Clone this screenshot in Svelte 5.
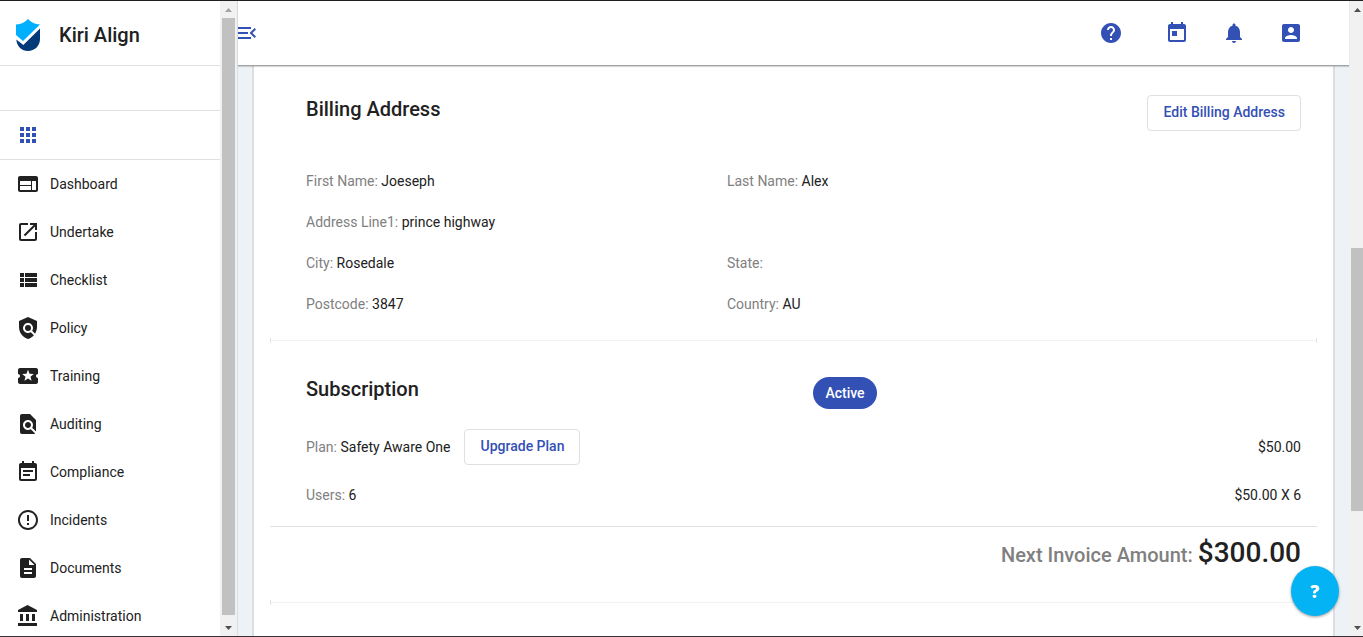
<script>
	const nav = [
		{ label: 'Dashboard', icon: 'M20 4H4c-1.1 0-1.99.9-1.99 2L2 18c0 1.1.9 2 2 2h16c1.1 0 2-.9 2-2V6c0-1.1-.9-2-2-2zm-5 14H4v-4h11v4zm0-5H4V9h11v4zm5 5h-4V9h4v9z' },
		{ label: 'Undertake', icon: 'M19 19H5V5h7V3H5c-1.11 0-2 .9-2 2v14c0 1.1.89 2 2 2h14c1.1 0 2-.9 2-2v-7h-2v7zM14 3v2h3.59l-9.83 9.83 1.41 1.41L19 6.41V10h2V3h-7z' },
		{ label: 'Checklist', icon: 'M4 14h4v-4H4v4zm0 5h4v-4H4v4zM4 9h4V5H4v4zm5 5h12v-4H9v4zm0 5h12v-4H9v4zM9 5v4h12V5H9z' },
		{ label: 'Policy', icon: 'M21 5l-9-4-9 4v6c0 5.55 3.84 10.74 9 12 2.3-.56 4.33-1.9 5.88-3.71l-3.12-3.12c-1.94 1.29-4.58 1.07-6.29-.64-1.95-1.95-1.95-5.12 0-7.07 1.95-1.95 5.12-1.95 7.07 0 1.71 1.71 1.92 4.35.64 6.29l2.9 2.9C20.29 15.69 21 13.38 21 11V5zM9 12a3 3 0 1 0 6 0a3 3 0 1 0-6 0z' },
		{ label: 'Training', icon: 'M20 12c0-1.1.9-2 2-2V6c0-1.1-.9-2-2-2H4c-1.1 0-1.99.9-1.99 2v4c1.1 0 1.99.9 1.99 2s-.89 2-2 2v4c0 1.1.9 2 2 2h16c1.1 0 2-.9 2-2v-4c-1.1 0-2-.9-2-2zm-4.42 4.8L12 14.5l-3.58 2.3 1.08-4.12-3.29-2.69 4.24-.25L12 5.8l1.54 3.95 4.24.25-3.29 2.69 1.09 4.11z' },
		{ label: 'Auditing', icon: 'M20 19.59V8l-6-6H6c-1.1 0-1.99.9-1.99 2L4 20c0 1.1.89 2 1.99 2H18c.45 0 .85-.15 1.19-.4l-4.43-4.43c-.8.52-1.74.83-2.76.83-2.76 0-5-2.24-5-5s2.24-5 5-5 5 2.24 5 5c0 1.02-.31 1.96-.83 2.75L20 19.59zM9 13c0 1.66 1.34 3 3 3s3-1.34 3-3-1.34-3-3-3-3 1.34-3 3z' },
		{ label: 'Compliance', icon: 'M17 10H7v2h10v-2zm2-7h-1V1h-2v2H8V1H6v2H5c-1.11 0-1.99.9-1.99 2L3 19c0 1.1.89 2 2 2h14c1.1 0 2-.9 2-2V5c0-1.1-.9-2-2-2zm0 16H5V8h14v11zm-5-5H7v2h7v-2z' },
		{ label: 'Incidents', icon: 'M11 15h2v2h-2zm0-8h2v6h-2zm.99-5C6.47 2 2 6.48 2 12s4.47 10 9.99 10C17.52 22 22 17.52 22 12S17.52 2 11.99 2zM12 20c-4.42 0-8-3.58-8-8s3.58-8 8-8 8 3.58 8 8-3.58 8-8 8z' },
		{ label: 'Documents', icon: 'M14 2H6c-1.1 0-1.99.9-1.99 2L4 20c0 1.1.89 2 1.99 2H18c1.1 0 2-.9 2-2V8l-6-6zm2 16H8v-2h8v2zm0-4H8v-2h8v2zm-3-5V3.5L18.5 9H13z' },
		{ label: 'Administration', icon: 'M4 10v7h3v-7H4zm6 0v7h3v-7h-3zM2 22h19v-3H2v3zm14-12v7h3v-7h-3zm-4.5-9L2 6v2h19V6l-9.5-5z' }
	];

	const tools = [
		{ name: 'help', icon: 'M12 2C6.48 2 2 6.48 2 12s4.48 10 10 10 10-4.48 10-10S17.52 2 12 2zm1 17h-2v-2h2v2zm2.07-7.75l-.9.92C13.45 12.9 13 13.5 13 15h-2v-.5c0-1.1.45-2.1 1.17-2.83l1.24-1.26c.37-.36.59-.86.59-1.41 0-1.1-.9-2-2-2s-2 .9-2 2H8c0-2.21 1.79-4 4-4s4 1.79 4 4c0 .88-.36 1.68-.93 2.25z' },
		{ name: 'calendar', icon: 'M19 3h-1V1h-2v2H8V1H6v2H5c-1.11 0-1.99.9-1.99 2L3 19c0 1.1.89 2 2 2h14c1.1 0 2-.9 2-2V5c0-1.1-.9-2-2-2zm0 16H5V8h14v11zM7 10h5v5H7z' },
		{ name: 'notifications', icon: 'M12 22c1.1 0 2-.9 2-2h-4c0 1.1.89 2 2 2zm6-6v-5c0-3.07-1.64-5.64-4.5-6.32V4c0-.83-.67-1.5-1.5-1.5s-1.5.67-1.5 1.5v.68C7.63 5.36 6 7.92 6 11v5l-2 2v1h16v-1l-2-2z' },
		{ name: 'account', icon: 'M3 5v14c0 1.1.89 2 2 2h14c1.1 0 2-.9 2-2V5c0-1.1-.9-2-2-2H5c-1.11 0-2 .9-2 2zm12 4c0 1.66-1.34 3-3 3s-3-1.34-3-3 1.34-3 3-3 3 1.34 3 3zm-9 8c0-2 4-3.1 6-3.1s6 1.1 6 3.1v1H6v-1z' }
	];

	const address = [
		[['First Name', 'Joeseph'], ['Last Name', 'Alex']],
		[['Address Line1', 'prince highway']],
		[['City', 'Rosedale'], ['State', '']],
		[['Postcode', '3847'], ['Country', 'AU']]
	];

	const price = 50;
	const users = 6;
	const money = (n) => '$' + n.toFixed(2);
</script>

{#snippet icon(d)}
	<svg class="icon" viewBox="0 0 24 24" aria-hidden="true"><path {d} /></svg>
{/snippet}

{#snippet scrollbar(before, size, after, dim)}
	<div class="scrollbar" aria-hidden="true">
		<svg class="arrow" class:dim viewBox="0 0 17 17"><path d="M5 11h7L8.500 7z" /></svg>
		<div style:flex-grow={before}></div>
		<div class="thumb" style:flex-grow={size}></div>
		<div style:flex-grow={after}></div>
		<svg class="arrow" viewBox="0 0 17 17"><path d="M5 7h7l-3.500 4z" /></svg>
	</div>
{/snippet}

<div class="app">
	<aside class="sidebar">
		<div class="side-content">
			<div class="brand">
				<svg class="logo" viewBox="0 0 24 32" aria-hidden="true">
					<path fill="#00b0ff" d="M12 0c2.500 3 6.500 5.200 12 5.400L7 22 0 16V5.400C5.500 5.200 9.500 3 12 0z" />
					<path fill="#003a78" d="M24 9.500V20c0 7-5.500 12-12 12C6 32 .8 27.500.3 20.500L7.300 26z" />
				</svg>
				<span class="brand-name">Kiri Align</span>
			</div>
			<div class="blank"></div>
			<div class="apps">
				<button class="icon-btn" aria-label="Apps">
					{@render icon('M4 8h4V4H4v4zm6 12h4v-4h-4v4zm-6 0h4v-4H4v4zm0-6h4v-4H4v4zm6 0h4v-4h-4v4zm6-10v4h4V4h-4zm-6 4h4V4h-4v4zm6 6h4v-4h-4v4zm0 6h4v-4h-4v4z')}
				</button>
			</div>
			<nav>
				{#each nav as item}
					<a href="#{item.label.toLowerCase()}">
						{@render icon(item.icon)}
						{item.label}
					</a>
				{/each}
			</nav>
		</div>
		{@render scrollbar(0, 597, 4, true)}
	</aside>

	<div class="main">
		<header>
			<button class="icon-btn menu" aria-label="Toggle menu">
				{@render icon('M3 18h13v-2H3v2zM3 13h10v-2H3v2zm0-7v2h13V6H3zm18 9.590L17.420 12 21 8.410 19.590 7l-5 5 5 5L21 15.590z')}
			</button>
			<div class="tools">
				{#each tools as tool}
					<button class="icon-btn {tool.name}" aria-label={tool.name}>{@render icon(tool.icon)}</button>
				{/each}
			</div>
		</header>

		<main>
			<div class="card">
				<section class="billing">
					<div class="title-row">
						<h2>Billing Address</h2>
						<button class="btn">Edit Billing Address</button>
					</div>
					<div class="fields">
						{#each address as row}
							<div class="field-row">
								{#each row as [label, value]}
									<div><span class="label">{label}:</span> {value}</div>
								{/each}
							</div>
						{/each}
					</div>
				</section>

				<hr />

				<section class="subscription">
					<div class="status-row">
						<h2>Subscription</h2>
						<div><span class="chip">Active</span></div>
					</div>
					<div class="line plan">
						<div><span class="label">Plan:</span> Safety Aware One</div>
						<button class="btn">Upgrade Plan</button>
						<span class="amount">{money(price)}</span>
					</div>
					<div class="line">
						<div><span class="label">Users:</span> {users}</div>
						<span class="amount">{money(price)} X {users}</span>
					</div>
				</section>

				<div class="total">
					<span class="total-label">Next Invoice Amount:</span>
					<span class="total-value">{money(price * users)}</span>
				</div>

				<hr />
			</div>
		</main>
	</div>

	<div class="page-scroll">
		{@render scrollbar(230, 263, 108, false)}
	</div>

	<button class="fab" aria-label="Support">?</button>
</div>

<style>
:global(body) {
	margin: 0;
	overflow: hidden;
}

.app {
	box-sizing: border-box;
	display: flex;
	height: 100vh;
	overflow: hidden;
	border-top: 1px solid #231f20;
	border-bottom: 1px solid #3b2f35;
	background: #fff;
	color: #212121;
	font: 400 14px/20px Roboto, sans-serif;
}

button {
	font: inherit;
	cursor: pointer;
}

h2 {
	margin: 0;
	font-size: 20px;
	font-weight: 500;
	line-height: 28px;
}

.icon {
	display: block;
	flex: none;
	width: 24px;
	height: 24px;
	fill: currentColor;
}

.icon-btn {
	display: block;
	padding: 0;
	border: 0;
	background: none;
	color: #3350b5;
}

/* sidebar */
.sidebar {
	display: flex;
	flex: none;
	border-right: 1px solid #dcdfe2;
}

.side-content {
	width: 220px;
	overflow: hidden;
}

.brand {
	display: flex;
	align-items: center;
	gap: 19px;
	height: 60px;
	padding: 4px 16px 0;
	border-bottom: 1px solid #e0e0e0;
}

.logo {
	width: 24px;
	height: 32px;
}

.brand-name {
	font-size: 20px;
	font-weight: 500;
	line-height: 28px;
}

.blank {
	height: 44px;
	border-bottom: 1px solid #e0e0e0;
}

.apps {
	display: flex;
	align-items: center;
	height: 48px;
	padding: 0 16px;
	border-bottom: 1px solid #e0e0e0;
}

nav a {
	display: flex;
	align-items: center;
	gap: 10px;
	height: 48px;
	padding: 0 16px;
	color: inherit;
	text-decoration: none;
}

/* scrollbars */
.scrollbar {
	display: flex;
	flex-direction: column;
	width: 17px;
	height: 100%;
	background: #f1f1f1;
}

.arrow {
	flex: none;
	width: 17px;
	height: 17px;
	fill: #505050;
}

.arrow.dim {
	fill: #a3a3a3;
}

.thumb {
	margin: 0 2px;
	background: #c1c1c1;
}

.page-scroll {
	flex: none;
	width: 14px;
	overflow: hidden;
}

/* main */
.main {
	display: flex;
	flex: 1;
	flex-direction: column;
	min-width: 0;
}

header {
	z-index: 1;
	display: flex;
	flex: none;
	align-items: center;
	justify-content: space-between;
	height: 64px;
	padding-right: 46px;
	overflow: hidden;
	border-bottom: 1px solid #a0a3a6;
	background: #fff;
	box-shadow: 0 1px 1px rgba(0, 0, 0, .15);
}

.menu {
	margin-left: -3px;
}

.tools {
	display: flex;
	gap: 33px;
}

.help {
	margin-right: 9px;
}

main {
	flex: 1;
	min-height: 0;
	padding: 0 14px;
	overflow: hidden;
	background: #ecf2f6;
}

.card {
	box-sizing: border-box;
	min-height: 100%;
	padding: 0 16px;
	border: solid #dcdfe2;
	border-width: 0 2px;
	background: #fff;
}

section {
	padding: 0 16px 0 36px;
}

.billing {
	padding-top: 29px;
	padding-bottom: 14px;
}

.title-row {
	display: flex;
	align-items: flex-start;
	justify-content: space-between;
	margin-bottom: 29px;
}

.btn {
	height: 36px;
	padding: 0 15px 2px 16px;
	border: 1px solid #e0e0e0;
	border-radius: 4px;
	background: #fff;
	color: #3350b5;
	font-weight: 500;
	white-space: nowrap;
}

.field-row {
	display: grid;
	grid-template-columns: 11fr 15fr;
	align-items: center;
	height: 41px;
}

.label {
	color: #808080;
}

/* faint rule with a short tick on both ends */
hr {
	height: 5px;
	margin: 0;
	border: solid #e2e2e2;
	border-width: 0 1px;
	background: linear-gradient(#f3f3f3, #f3f3f3) center / 100% 1px no-repeat;
}

.subscription {
	padding-top: 32px;
	padding-bottom: 13px;
	border-bottom: 1px solid #e0e0e0;
}

.status-row {
	display: grid;
	grid-template-columns: 51fr 49fr;
	margin-bottom: 20px;
}

.chip {
	display: inline-block;
	margin-top: 2px;
	padding: 6px 12px;
	border-radius: 16px;
	background: #3350b5;
	color: #fff;
	font-weight: 500;
}

.line {
	display: flex;
	align-items: center;
	gap: 13px;
	height: 36px;
}

.plan {
	margin-bottom: 12px;
}

.amount {
	margin-left: auto;
}

.total {
	display: flex;
	align-items: baseline;
	justify-content: flex-end;
	gap: 5px;
	padding: 8px 16px 29px;
	font-weight: 500;
}

.total-label {
	color: #808080;
	font-size: 20px;
}

.total-value {
	font-size: 28px;
	line-height: 36px;
}

.fab {
	position: fixed;
	right: 24px;
	bottom: 21px;
	z-index: 2;
	width: 48px;
	height: 50px;
	padding: 0;
	border: 0;
	border-radius: 50%;
	background: #03b3f3;
	box-shadow: 0 1px 3px rgba(0, 0, 0, .4);
	color: #fff;
	font: 800 18px/24px "Open Sans", sans-serif;
}
</style>
